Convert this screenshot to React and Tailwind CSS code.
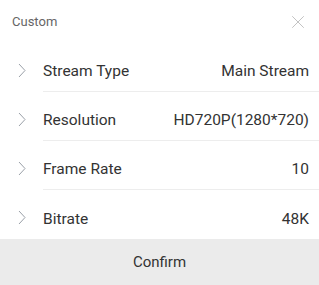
import { X } from 'lucide-react'

const ROWS = [
  ['Stream Type', 'Main Stream'],
  ['Resolution', 'HD720P(1280*720)'],
  ['Frame Rate', '10'],
  ['Bitrate', '48K'],
]

function Chevron() {
  return (
    <svg width="8" height="15" viewBox="0 0 8 15" fill="none" className="text-[#9aa0a8]">
      <path d="M1 1 L7 7.5 L1 14" stroke="currentColor" strokeWidth="1" />
    </svg>
  )
}

export default function App() {
  return (
    <div className="flex h-[285px] w-[319px] flex-col bg-white font-['Roboto',sans-serif]">
      <div className="flex h-[43px] items-center justify-between pl-3 pr-[10px]">
        <span className="text-[13px] text-[#666]">Custom</span>
        <X className="h-[22px] w-[22px] text-[#bdbdbd]" strokeWidth={1} />
      </div>
      {ROWS.map(([label, value], i) => (
        <div key={label} className="flex h-[49px]">
          <div className="flex w-[43px] items-center pl-[18px] pt-[5px]">
            <Chevron />
          </div>
          <div className={`flex flex-1 items-center justify-between pr-[10px] pt-[10px] text-[15.5px] text-[#333] ${i < ROWS.length - 1 ? 'border-b border-[#ededed]' : ''}`}>
            <span>{label}</span>
            <span>{value}</span>
          </div>
        </div>
      ))}
      <div className="flex flex-1 items-center justify-center bg-[#ebebeb] text-[15px] text-[#333]">
        Confirm
      </div>
    </div>
  )
}
